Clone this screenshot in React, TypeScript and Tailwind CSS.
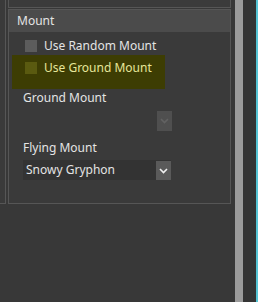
import React from "react";

function Chevron({ color }: { color: string }) {
  return (
    <svg width="9" height="6" viewBox="0 0 9 6">
      <path d="M1 1 L4.5 4.5 L8 1" fill="none" stroke={color} strokeWidth="1.6" />
    </svg>
  );
}

export default function App() {
  return (
    <div className="w-[258px] h-[302px] bg-[#383838] flex overflow-hidden font-['Noto_Sans',sans-serif] text-[12px] leading-[16px] text-[#e4e4e4]">
      {/* left neighbour box */}
      <div className="w-[6px] h-[204px] shrink-0 border-r border-b border-[#565656] bg-[#3a3a3a]" />
      {/* main column */}
      <div className="ml-[2px] w-[223px] shrink-0 flex flex-col">
        <div className="h-[8px] border-x border-b border-[#565656] bg-[#3b3b3b]" />
        <div className="mt-[1px] h-[195px] border border-[#565656] flex flex-col">
          <div className="h-[22px] bg-[#4b4b4b] pl-[8px] flex items-center">Mount</div>
          <div className="flex-1 bg-[#3a3a3a] flex flex-col">
            <div className="mt-[6px] h-[16px] flex items-center pl-[16px]">
              <div className="w-[12px] h-[12px] bg-[#5c5c5c]" />
              <span className="ml-[7px]">Use Random Mount</span>
            </div>
            <div className="mt-[1px] ml-[3px] w-[153px] h-[34px] bg-[#3d3d03] pt-[5px]">
              <div className="h-[16px] flex items-center pl-[13px]">
                <div className="w-[12px] h-[12px] bg-[#5a5a10]" />
                <span className="ml-[7px] text-[#e6e69a]">Use Ground Mount</span>
              </div>
            </div>
            <div className="mt-[1px] pl-[14px] h-[16px]">Ground Mount</div>
            <div className="mt-[5px] h-[20px] pl-[14px] w-[163px] flex justify-end">
              <div className="w-[15px] h-[20px] bg-[#4f4f4f] flex items-center justify-center">
                <Chevron color="#626262" />
              </div>
            </div>
            <div className="mt-[9px] pl-[14px] h-[16px]">Flying Mount</div>
            <div className="mt-[4px] ml-[14px] w-[148px] h-[20px] bg-[#333333] flex items-center">
              <span className="flex-1 pl-[3px]">Snowy Gryphon</span>
              <div className="w-[15px] h-[19px] mt-[1px] bg-[#5a5a5a] flex items-center justify-center">
                <Chevron color="#f0f0f0" />
              </div>
            </div>
          </div>
        </div>
      </div>
      <div className="w-[4px] shrink-0" />
      <div className="w-[8px] h-full shrink-0 bg-[#9b9b9b]" />
      <div className="w-[13px] h-full shrink-0 bg-[#343434]" />
      <div className="w-[2px] h-full shrink-0 bg-[#55c4d4]" />
    </div>
  );
}
